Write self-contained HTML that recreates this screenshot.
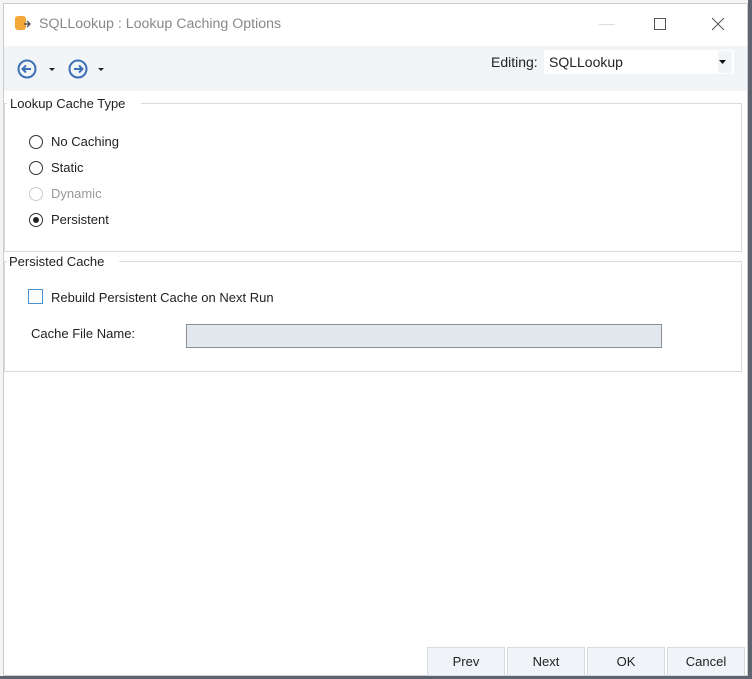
<!DOCTYPE html>
<html><head><meta charset="utf-8"><style>
*{box-sizing:border-box;margin:0;padding:0}
body{width:752px;height:679px;background:#f4f4f4;font-family:"Liberation Sans",sans-serif;font-size:13px;color:#222;position:relative;overflow:hidden}
.win{position:absolute;left:3px;top:3px;width:745px;height:673px;background:#fff;border:1px solid #c9ccd0}
.abs{position:absolute}
.tb{left:0;top:42px;width:743px;height:45px;background:#f2f5f8}
.grp{border:1px solid #d8dce0;border-top:none}
.gl{position:absolute;height:1px;background:#d8dce0}
.radio{position:absolute;width:14px;height:14px;border:1.5px solid #333;border-radius:50%}
.btn{position:absolute;top:643px;width:78px;height:29px;background:#f0f3f7;border:1px solid #d6dbe0;text-align:center;line-height:28px;font-size:13px;color:#222}
</style></head><body>
<div class="abs" style="left:748px;top:0;width:4px;height:679px;background:#5d6470"></div>
<div class="abs" style="left:0;top:676px;width:752px;height:3px;background:#5d6470"></div>
<div class="win">
 <svg class="abs" style="left:10px;top:11px" width="18" height="18" viewBox="0 0 18 18"><rect x="1" y="1" width="11" height="14" rx="3" fill="#f4a636"/><path d="M10 9h6M13 6l3 3-3 3" stroke="#555" stroke-width="1.4" fill="none"/></svg>
 <div class="abs" style="left:35px;top:12px;font-size:14.2px;color:#888">SQLLookup : Lookup Caching Options</div>
 <div class="abs" style="left:595px;top:20px;width:16px;height:1px;background:#ddd"></div>
 <div class="abs" style="left:650px;top:14px;width:12px;height:12px;border:1px solid #555"></div>
 <svg class="abs" style="left:707px;top:13px" width="14" height="14"><path d="M1 1L13 13M13 1L1 13" stroke="#555" stroke-width="1"/></svg>
 <div class="abs tb">
  <svg class="abs" style="left:12px;top:12px" width="100" height="22"><circle cx="11" cy="11" r="8.5" fill="none" stroke="#3d6fb5" stroke-width="2"/><path d="M15 11H7M10 7.5L6.5 11 10 14.5" stroke="#3d6fb5" stroke-width="2" fill="none"/><path d="M33 10h6l-3 3z" fill="#222"/><circle cx="62" cy="11" r="8.5" fill="none" stroke="#3d6fb5" stroke-width="2"/><path d="M58 11h8M63 7.5L66.5 11 63 14.5" stroke="#3d6fb5" stroke-width="2" fill="none"/><path d="M82 10h6l-3 3z" fill="#222"/></svg>
  <div class="abs" style="left:487px;top:8px;font-size:14px;color:#222">Editing:</div>
  <div class="abs" style="left:540px;top:4px;width:190px;height:24px;background:#fff"></div>
  <div class="abs" style="left:545px;top:8px;font-size:14px;color:#222">SQLLookup</div>
  <div class="abs" style="left:714px;top:5px;width:14px;height:22px;background:#f2f5f8"></div>
  <svg class="abs" style="left:715px;top:14px" width="8" height="5"><path d="M0 0h7l-3.5 4z" fill="#111"/></svg>
 </div>
 <div class="abs grp" style="left:0;top:99px;width:738px;height:149px"></div>
 <div class="gl" style="left:0;top:99px;width:3px"></div>
 <div class="gl" style="left:137px;top:99px;width:601px"></div>
 <div class="abs" style="left:6px;top:92px;font-size:13px">Lookup Cache Type</div>
 <div class="radio" style="left:25px;top:131px"></div><div class="abs" style="left:47px;top:130px">No Caching</div>
 <div class="radio" style="left:25px;top:157px"></div><div class="abs" style="left:47px;top:156px">Static</div>
 <div class="radio" style="left:25px;top:183px;border-color:#ccc"></div><div class="abs" style="left:47px;top:182px;color:#999">Dynamic</div>
 <div class="radio" style="left:25px;top:209px"><div class="abs" style="left:2.5px;top:2.5px;width:6px;height:6px;border-radius:50%;background:#222"></div></div><div class="abs" style="left:47px;top:208px">Persistent</div>
 <div class="abs grp" style="left:0;top:257px;width:738px;height:111px"></div>
 <div class="gl" style="left:0;top:257px;width:3px"></div>
 <div class="gl" style="left:115px;top:257px;width:623px"></div>
 <div class="abs" style="left:5px;top:250px;font-size:13px">Persisted Cache</div>
 <div class="abs" style="left:24px;top:285px;width:15px;height:15px;border:1.5px solid #4a8fd0"></div>
 <div class="abs" style="left:47px;top:286px">Rebuild Persistent Cache on Next Run</div>
 <div class="abs" style="left:27px;top:322px">Cache File Name:</div>
 <div class="abs" style="left:182px;top:320px;width:476px;height:24px;background:#e3e8ee;border:1px solid #8a8e92"></div>
 <div class="btn" style="left:423px">Prev</div>
 <div class="btn" style="left:503px">Next</div>
 <div class="btn" style="left:583px">OK</div>
 <div class="btn" style="left:663px">Cancel</div>
</div>
</body></html>
